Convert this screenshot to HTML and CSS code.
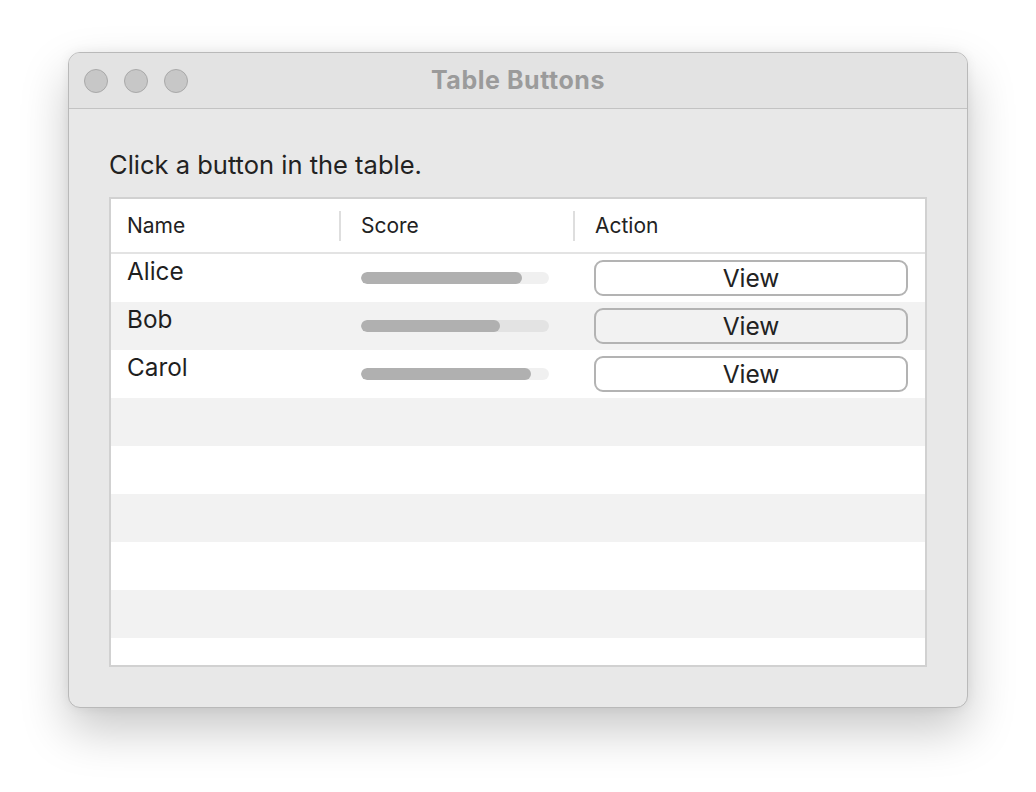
FILE: index.html
```html
<!DOCTYPE html>
<html>
<head>
<meta charset="utf-8">
<link rel="stylesheet" href="styles.css">
</head>
<body>
<div class="stage">
  <div class="window">
    <div class="titlebar">
      <div class="lights">
        <span class="light"></span>
        <span class="light"></span>
        <span class="light"></span>
      </div>
      <div class="title">Table Buttons</div>
    </div>
    <div class="content">
      <div class="label">Click a button in the table.</div>
      <div class="table">
        <div class="thead">
          <div class="th th-name">Name</div>
          <div class="th th-sep">Score</div>
          <div class="th th-sep">Action</div>
        </div>
        <div class="tbody">
          <div class="row">
            <div class="cell name">Alice</div>
            <div class="cell score"><div class="track"><div class="fill" style="width:85.6%"></div></div></div>
            <div class="cell action"><button class="btn">View</button></div>
          </div>
          <div class="row alt">
            <div class="cell name">Bob</div>
            <div class="cell score"><div class="track"><div class="fill" style="width:73.9%"></div></div></div>
            <div class="cell action"><button class="btn">View</button></div>
          </div>
          <div class="row">
            <div class="cell name">Carol</div>
            <div class="cell score"><div class="track"><div class="fill" style="width:90.6%"></div></div></div>
            <div class="cell action"><button class="btn">View</button></div>
          </div>
          <div class="row alt"></div>
          <div class="row"></div>
          <div class="row alt"></div>
          <div class="row"></div>
          <div class="row alt"></div>
          <div class="row"></div>
        </div>
      </div>
    </div>
  </div>
</div>
</body>
</html>
```
FILE: styles.css
```css
html, body {
  margin: 0;
  padding: 0;
  background: #ffffff;
}
body {
  font-family: Inter, "Noto Sans", "DejaVu Sans", sans-serif;
  color: #222222;
}
.stage {
  padding: 52px 0 0 68px;
  height: 792px;
  box-sizing: border-box;
  overflow: hidden;
}
.window {
  width: 900px;
  height: 656px;
  box-sizing: border-box;
  border: 1px solid #b9b9b9;
  border-radius: 12px;
  background: #e8e8e8;
  overflow: hidden;
  box-shadow: 0 22px 48px rgba(0,0,0,0.22), 0 0 12px rgba(0,0,0,0.06);
  display: flex;
  flex-direction: column;
}
.titlebar {
  height: 55px;
  flex: none;
  background: #e3e3e3;
  border-bottom: 1px solid #c3c3c3;
  display: flex;
  align-items: center;
  position: relative;
}
.lights {
  display: flex;
  gap: 16px;
  padding-left: 15px;
}
.light {
  width: 22px;
  height: 22px;
  border-radius: 50%;
  background: #c7c7c7;
  border: 1px solid #a9a9a9;
}
.title {
  position: absolute;
  left: 0;
  right: 0;
  top: 0;
  bottom: 2px;
  display: flex;
  align-items: center;
  justify-content: center;
  font-weight: 700;
  font-size: 25px;
  letter-spacing: 0.55px;
  color: #9b9b9b;
}
.content {
  flex: 1;
  min-height: 0;
  padding: 44px 40px 40px 40px;
  display: flex;
  flex-direction: column;
}
.label {
  font-size: 25.5px;
  line-height: 24px;
  height: 24px;
  margin-bottom: 20px;
  color: #222;
}
.table {
  flex: 1;
  min-height: 0;
  border: 2px solid #d1d1d1;
  background: #ffffff;
  display: flex;
  flex-direction: column;
  overflow: hidden;
}
.thead {
  height: 53px;
  flex: none;
  border-bottom: 2px solid #e3e3e3;
  display: grid;
  grid-template-columns: 228px 234px 1fr;
  align-items: center;
}
.th {
  font-size: 21px;
  height: 30px;
  line-height: 30px;
  color: #222;
  box-sizing: border-box;
}
.th-name {
  padding-left: 16px;
}
.th-sep {
  border-left: 2px solid #dedede;
  padding-left: 20px;
}
.tbody {
  flex: 1;
  min-height: 0;
  display: flex;
  flex-direction: column;
  overflow: hidden;
}
.row {
  height: 48px;
  flex: none;
  display: grid;
  grid-template-columns: 228px 234px 1fr;
  align-items: center;
  background: #ffffff;
}
.row.alt {
  background: #f2f2f2;
}
.cell.name {
  padding-left: 16px;
  font-size: 24.3px;
  align-self: start;
  padding-top: 3px;
  line-height: 28px;
  color: #1f1f1f;
}
.cell.score {
  padding-left: 22px;
  padding-right: 22px;
}
.track {
  width: 188px;
  height: 12px;
  border-radius: 6px;
  background: rgba(0,0,0,0.06);
  overflow: hidden;
}
.fill {
  height: 12px;
  border-radius: 6px;
  background: #b0b0b0;
}
.cell.action {
  padding-left: 21px;
  padding-right: 17px;
}
.btn {
  display: block;
  width: 100%;
  height: 36px;
  box-sizing: border-box;
  border: 2px solid #b3b3b3;
  border-radius: 9px;
  background: transparent;
  font-family: Inter, "Noto Sans", "DejaVu Sans", sans-serif;
  font-size: 24.5px;
  color: #222;
  padding: 0;
  line-height: 30px;
}
```
